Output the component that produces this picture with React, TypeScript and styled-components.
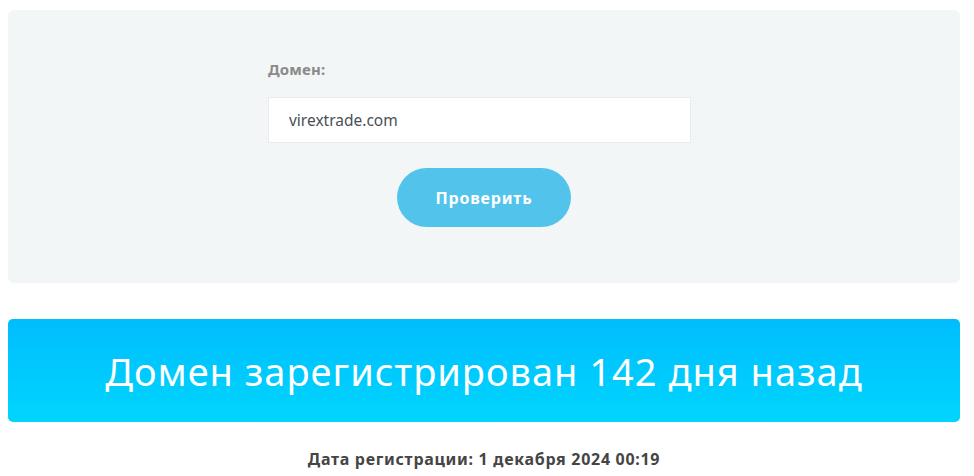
import React from "react";
import styled, { createGlobalStyle } from "styled-components";

const Global = createGlobalStyle`
  body {
    margin: 8px;
    background: #ffffff;
    font-family: "Noto Sans", "Open Sans", sans-serif;
  }
`;

const Page = styled.div`
  width: 952px;
  display: flex;
  flex-direction: column;
`;

const Panel = styled.form`
  margin-top: 2px;
  height: 273px;
  box-sizing: border-box;
  background: #f3f6f7;
  border-radius: 6px;
  padding: 50px 0 0 260px;
  display: flex;
  flex-direction: column;
  align-items: flex-start;
`;

const Label = styled.label`
  font-size: 15px;
  font-weight: 700;
  color: #8a8a8a;
  line-height: 19px;
  letter-spacing: 0.2px;
`;

const Input = styled.input`
  margin-top: 18px;
  width: 423px;
  height: 46px;
  box-sizing: border-box;
  border: 1px solid #e9ecee;
  background: #ffffff;
  padding: 0 20px;
  font-family: "Noto Sans", sans-serif;
  font-size: 15.5px;
  color: #4a4f57;
  outline: none;
`;

const Button = styled.button`
  margin-top: 25px;
  margin-left: 129px;
  width: 174px;
  height: 59px;
  border: none;
  border-radius: 30px;
  background: #52c4eb;
  color: #ffffff;
  font-family: "Noto Sans", sans-serif;
  font-size: 16px;
  font-weight: 700;
  letter-spacing: 0.8px;
`;

const Banner = styled.div`
  margin-top: 36px;
  height: 103px;
  border-radius: 5px;
  background: linear-gradient(180deg, #00bdfe 0%, #00d5fd 100%);
  display: flex;
  align-items: center;
  justify-content: center;
  padding-top: 1px;
  box-sizing: border-box;
  color: #ffffff;
  font-size: 38px;
  font-weight: 400;
  letter-spacing: 1px;
`;

const Info = styled.div`
  margin-top: 26px;
  text-align: center;
  font-size: 16px;
  font-weight: 700;
  color: #454545;
  letter-spacing: 0.7px;
`;

export default function App() {
  return (
    <>
      <Global />
      <Page>
        <Panel onSubmit={(e) => e.preventDefault()}>
          <Label>Домен:</Label>
          <Input defaultValue="virextrade.com" />
          <Button type="submit">Проверить</Button>
        </Panel>
        <Banner>Домен зарегистрирован 142 дня назад</Banner>
        <Info>Дата регистрации: 1 декабря 2024 00:19</Info>
      </Page>
    </>
  );
}
